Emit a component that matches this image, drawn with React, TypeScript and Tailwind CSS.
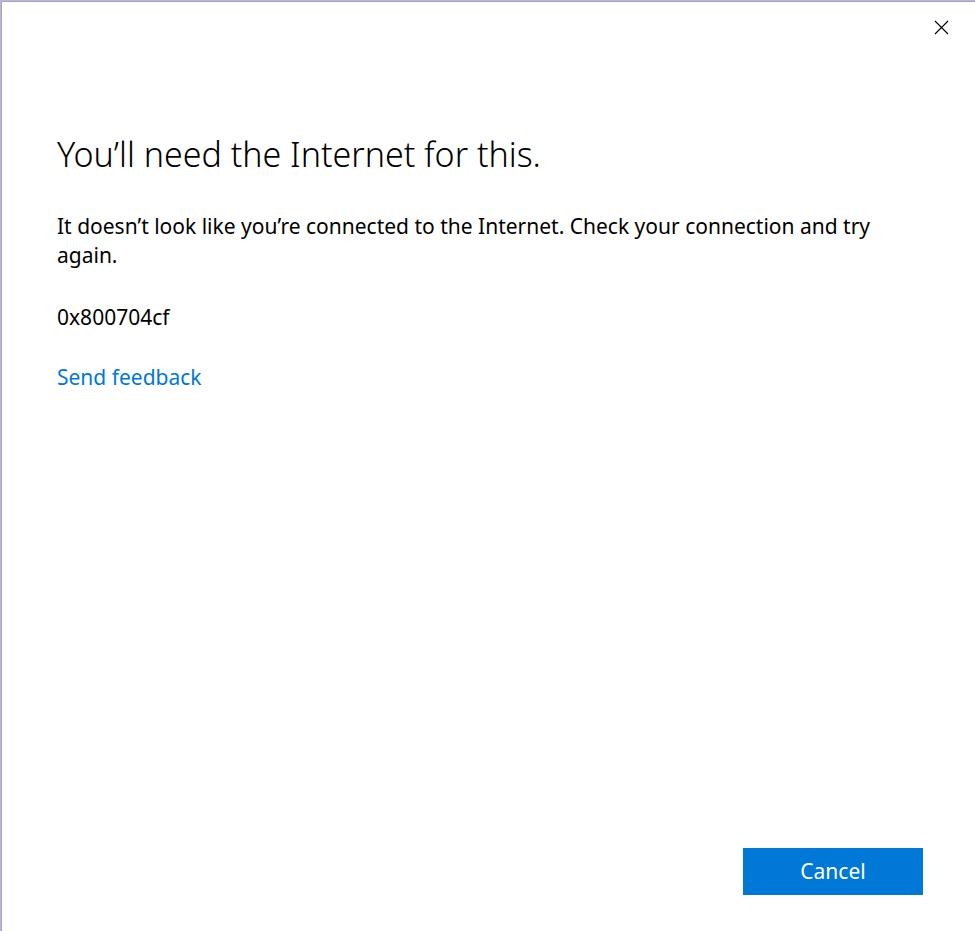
import React from "react";

export default function App() {
  return (
    <div className="h-[931px] w-[975px] bg-[#bcbcbc] pl-px pt-px overflow-hidden">
      <div
        className="relative flex h-full flex-col border-l border-t border-[#a3a1d9] bg-white text-black"
        style={{ fontFamily: '"Noto Sans", "Open Sans", sans-serif' }}
      >
        <button className="absolute right-[26px] top-[17px] flex h-4 w-4 items-center justify-center">
          <svg width="15" height="15" viewBox="0 0 15 15" fill="none" stroke="#000" strokeWidth="1.1">
            <path d="M1 1 L14 14 M14 1 L1 14" />
          </svg>
        </button>

        <div className="flex flex-1 flex-col pl-[55px] pr-[56px] pt-[130px]">
          <h1 className="text-[34px] font-light leading-[44px]">You’ll need the Internet for this.</h1>
          <p className="mt-[36px] text-[21px] leading-[29px]">
            It doesn’t look like you’re connected to the Internet. Check your connection and try again.
          </p>
          <p className="mt-[33px] text-[21px] leading-[29px]">0x800704cf</p>
          <a className="mt-[31px] self-start text-[21px] leading-[29px] text-[#0078d7]" href="#">
            Send feedback
          </a>
        </div>

        <div className="flex justify-end pb-[36px] pr-[52px]">
          <button className="h-[47px] w-[180px] bg-[#0078d7] text-[21px] text-white">Cancel</button>
        </div>
      </div>
    </div>
  );
}
